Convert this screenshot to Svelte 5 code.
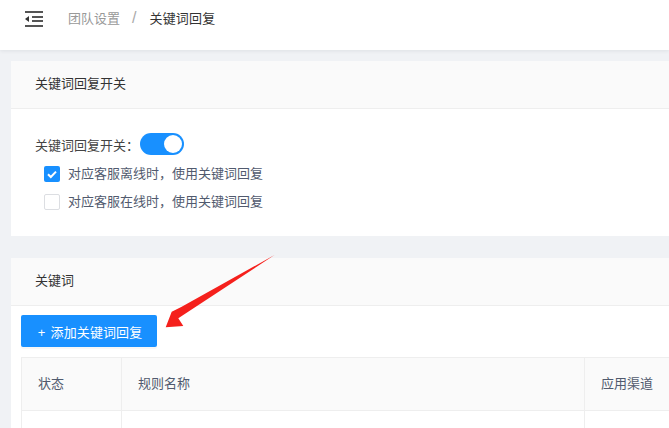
<script>
	const columns = [
		{ label: '状态', cls: 'col-status' },
		{ label: '规则名称', cls: 'col-name' },
		{ label: '应用渠道', cls: 'col-channel' }
	];
</script>

<div class="page">
	<header class="topbar">
		<svg class="fold" width="18" height="16" viewBox="0 0 18 16" aria-hidden="true">
			<path d="M0 0h18v2H0zM7 5h11v2H7zM7 9h11v2H7zM0 14h18v2H0z" fill="#555" />
			<path d="M0 8l4-3v6z" fill="#333" />
		</svg>
		<nav class="crumbs">
			<span class="crumb-link">团队设置</span>
			<span class="sep">/</span>
			<span class="crumb-current">关键词回复</span>
		</nav>
	</header>

	<main class="content">
		<section class="card">
			<div class="card-head">关键词回复开关</div>
			<div class="card-body switch-body">
				<div class="switch-row">
					<span>关键词回复开关&#65306;</span>
					<span class="switch"><span class="knob"></span></span>
				</div>
				<label class="check">
					<span class="box checked">
						<svg width="16" height="16" viewBox="0 0 16 16" aria-hidden="true">
							<path d="M4 8.2l2.800 2.800L12 5.600" fill="none" stroke="#fff" stroke-width="2" />
						</svg>
					</span>
					<span class="check-text">对应客服离线时&#65292;使用关键词回复</span>
				</label>
				<label class="check">
					<span class="box"></span>
					<span class="check-text">对应客服在线时&#65292;使用关键词回复</span>
				</label>
			</div>
		</section>

		<section class="card second">
			<div class="card-head">关键词</div>
			<div class="card-body table-body">
				<button class="add">+ 添加关键词回复</button>
				<div class="table">
					<div class="row head">
						{#each columns as col}
							<div class="cell {col.cls}">{col.label}</div>
						{/each}
					</div>
					<div class="row">
						{#each columns as col}
							<div class="cell {col.cls}"></div>
						{/each}
					</div>
				</div>
			</div>
		</section>
	</main>

	<svg class="arrow" width="669" height="428" viewBox="0 0 669 428" aria-hidden="true">
		<path d="M274.500 255L181.700 306.700L171.700 311.700L165.700 327.300L183.300 326L178.300 318.300Z" fill="#f5201c" />
	</svg>
</div>

<style>
	:global(body) {
		margin: 0;
		overflow: hidden;
	}

	.page {
		position: relative;
		width: 669px;
		height: 428px;
		overflow: hidden;
		background: #f0f2f5;
		font-family: "Liberation Sans", "Noto Sans CJK SC", sans-serif;
		font-size: 13px;
		color: #515a6e;
	}

	.topbar {
		display: flex;
		align-items: flex-start;
		height: 50px;
		padding: 11px 0 0 25px;
		box-sizing: border-box;
		background: #fff;
		box-shadow: 0 1px 4px rgba(0, 21, 41, 0.08);
	}

	.fold {
		display: block;
		margin-right: 25px;
	}

	.crumbs {
		display: flex;
		align-items: center;
		height: 12px;
	}

	.crumb-link {
		color: #999;
	}

	.sep {
		margin: 2px 13px 0 12px;
		color: #aaa;
		font-size: 16px;
	}

	.crumb-current {
		color: #333;
		letter-spacing: 0.2px;
	}

	.content {
		padding: 11px 0 0 11px;
	}

	.card {
		width: 100%;
		background: #fff;
	}

	.second {
		margin-top: 22px;
	}

	.card-head {
		height: 48px;
		padding-left: 24px;
		line-height: 45px;
		box-sizing: border-box;
		background: #fafafa;
		border-bottom: 1px solid #eee;
		color: #333;
	}

	.switch-body {
		height: 127px;
		box-sizing: border-box;
		padding: 24px 0 0 24px;
	}

	.switch-row {
		display: flex;
		align-items: center;
		gap: 1px;
		height: 22px;
		color: #444;
	}

	.switch {
		position: relative;
		width: 44px;
		height: 22px;
		border-radius: 11px;
		background: #1890ff;
	}

	.knob {
		position: absolute;
		top: 2px;
		right: 2px;
		width: 18px;
		height: 18px;
		border-radius: 50%;
		background: #fff;
	}

	.check {
		display: flex;
		align-items: center;
		gap: 8px;
		height: 16px;
		margin: 11px 0 0 9px;
		color: #515a6e;
	}

	.check + .check {
		margin-top: 12px;
	}

	.check-text {
		padding-bottom: 3px;
	}

	.box {
		display: block;
		width: 16px;
		height: 16px;
		box-sizing: border-box;
		border: 1px solid #dcdee2;
		border-radius: 2px;
		background: #fff;
	}

	.box.checked {
		border: none;
		background: #1890ff;
	}

	.box svg {
		display: block;
	}

	.table-body {
		padding: 9px 0 0 10px;
	}

	.add {
		display: block;
		width: 136px;
		height: 32px;
		padding: 0 0 0 2px;
		border: none;
		border-radius: 2px;
		background: #1890ff;
		color: #fff;
		font: inherit;
		letter-spacing: 0.1px;
		word-spacing: 1.500px;
		box-shadow: 0 2px 0 rgba(0, 0, 0, 0.03);
	}

	.table {
		margin-top: 10px;
		border-top: 1px solid #eee;
		border-left: 1px solid #eee;
		width: 700px;
	}

	.row {
		display: flex;
		height: 53px;
		box-sizing: border-box;
		border-bottom: 1px solid #eee;
	}

	.row.head {
		background: #fafafa;
		color: #515a6e;
	}

	.cell {
		box-sizing: border-box;
		padding-left: 16px;
		line-height: 52px;
		border-right: 1px solid #eee;
	}

	.col-status {
		width: 100px;
	}

	.col-name {
		width: 463px;
	}

	.col-channel {
		width: 137px;
	}

	.arrow {
		position: absolute;
		top: 0;
		left: 0;
		pointer-events: none;
	}
</style>
